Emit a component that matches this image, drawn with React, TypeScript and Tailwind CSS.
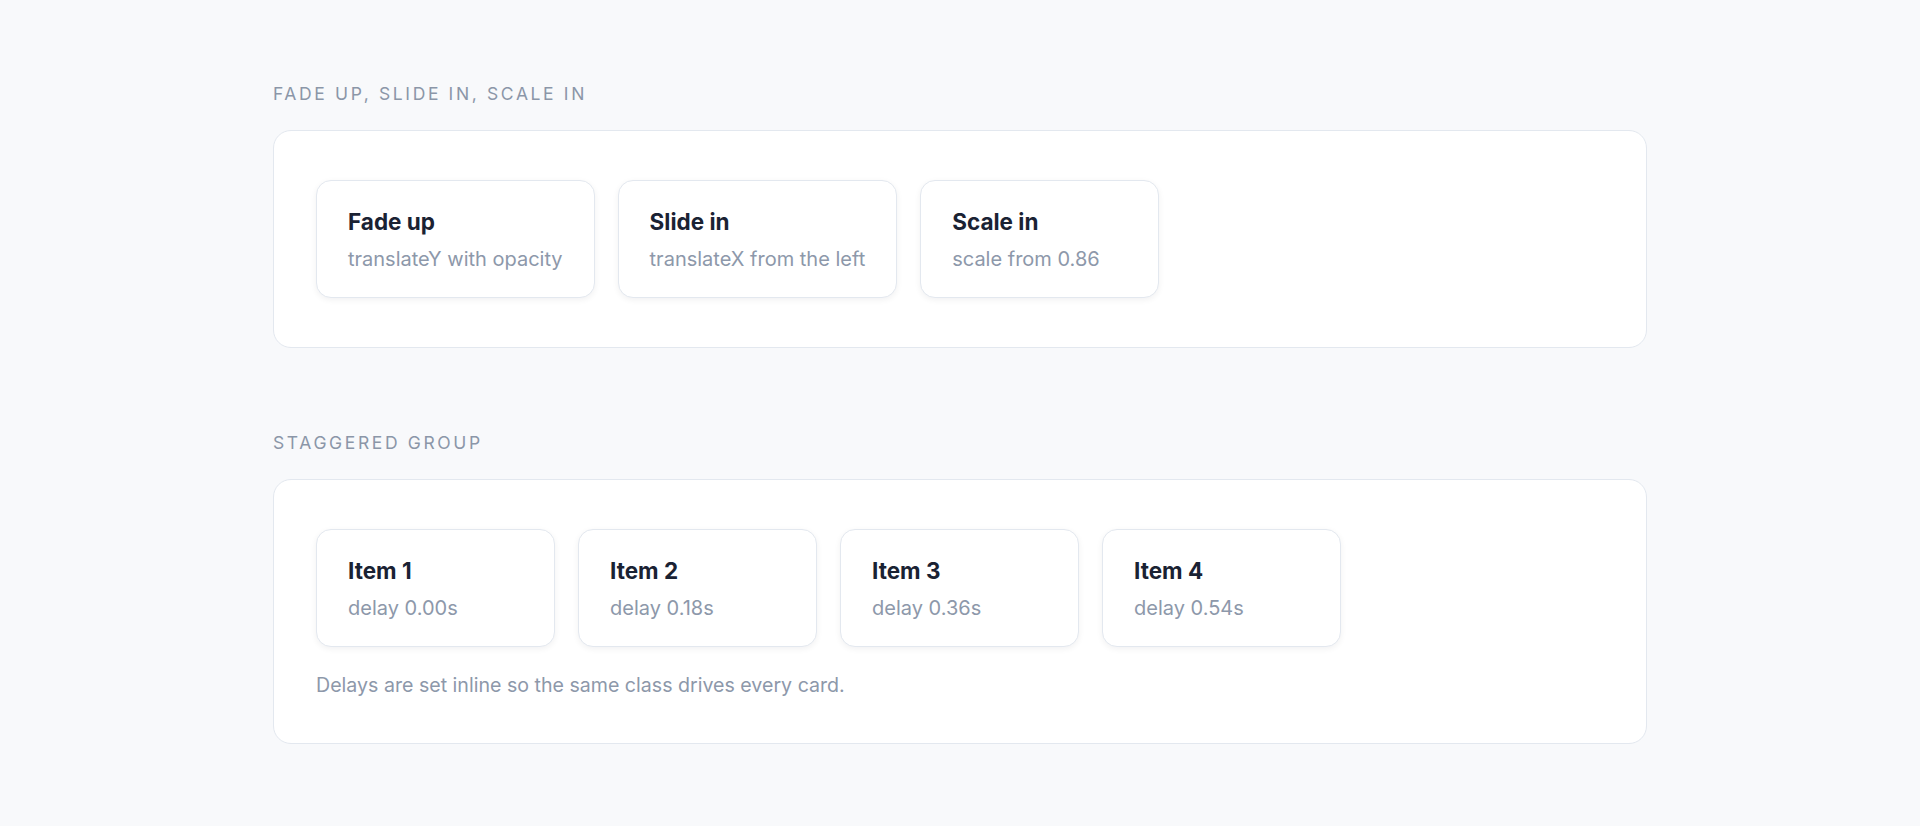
import React from "react";

type Demo = { title: string; note: string };

const entrances: Demo[] = [
  { title: "Fade up", note: "translateY with opacity" },
  { title: "Slide in", note: "translateX from the left" },
  { title: "Scale in", note: "scale from 0.86" },
];

const staggered: Demo[] = [0, 1, 2, 3].map((i) => ({
  title: `Item ${i + 1}`,
  note: `delay ${(i * 0.18).toFixed(2)}s`,
}));

function Card({ title, note }: Demo) {
  return (
    <div className="min-w-[239px] rounded-[15px] border border-[#e3e8ef] bg-white px-[31px] pt-[27px] pb-[24px] shadow-[0_2px_6px_rgba(15,23,42,0.06)]">
      <div className="text-[22.5px] leading-[28px] font-bold text-[#1a2233]">{title}</div>
      <div className="mt-[9px] text-[20px] leading-[28px] text-[#8d98aa]">{note}</div>
    </div>
  );
}

function Section({
  label,
  children,
  bottom,
}: {
  label: string;
  children: React.ReactNode;
  bottom: string;
}) {
  return (
    <section>
      <h2 className="mb-6 text-[17.5px] leading-[24px] font-normal uppercase tracking-[0.15em] text-[#8b96a8]">
        {label}
      </h2>
      <div className={`rounded-[18px] border border-[#e3e8ef] bg-white px-[42px] pt-[49px] ${bottom}`}>
        {children}
      </div>
    </section>
  );
}

export default function App() {
  return (
    <div
      className="min-h-screen bg-[#f8f9fb] pt-[82px] pb-20"
      style={{ fontFamily: "Inter, 'Noto Sans', sans-serif" }}
    >
      <div className="mx-auto flex max-w-[1374px] flex-col gap-[83px]">
        <Section label="Fade up, slide in, scale in" bottom="pb-[49px]">
          <div className="flex gap-[23px]">
            {entrances.map((d) => (
              <Card key={d.title} {...d} />
            ))}
          </div>
        </Section>
        <Section label="Staggered group" bottom="pb-[44px]">
          <div className="flex gap-[23px]">
            {staggered.map((d) => (
              <Card key={d.title} {...d} />
            ))}
          </div>
          <p className="mt-[24px] text-[19.6px] leading-[28px] text-[#8d98aa]">
            Delays are set inline so the same class drives every card.
          </p>
        </Section>
      </div>
    </div>
  );
}
